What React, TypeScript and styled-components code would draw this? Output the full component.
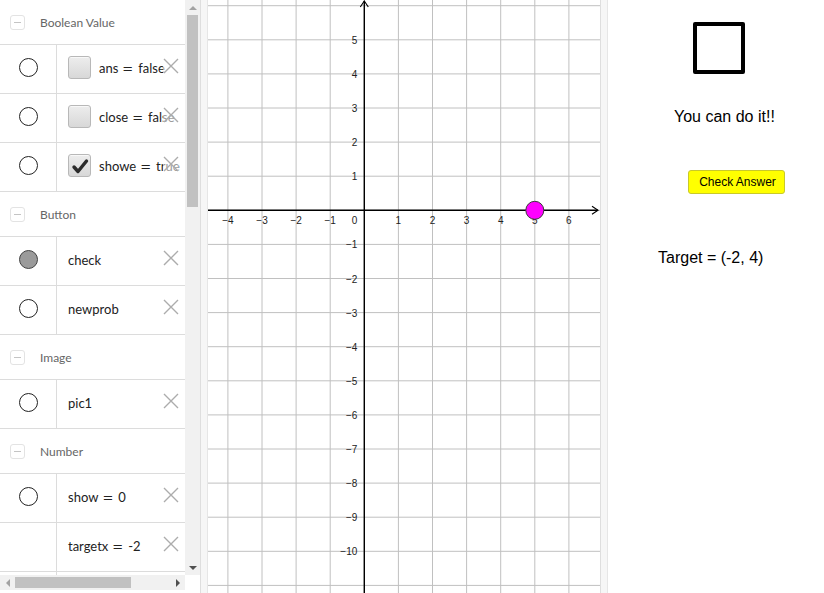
import styled, { createGlobalStyle } from "styled-components";

const GlobalStyle = createGlobalStyle`
  html, body {
    margin: 0;
    padding: 0;
    overflow: hidden;
    background: #fff;
  }
`;

const Frame = styled.div`
  display: flex;
  width: 824px;
  height: 593px;
  background: #fff;
  font-family: "Lato", "Liberation Sans", sans-serif;
`;

/* ---------- algebra view ---------- */

const AlgebraPanel = styled.div`
  display: flex;
  flex-direction: column;
  width: 200px;
  height: 593px;
  flex-shrink: 0;
`;

const AlgebraBody = styled.div`
  display: flex;
  height: 575px;
`;

const List = styled.div`
  width: 185px;
  height: 575px;
  overflow: hidden;
`;

const Header = styled.div`
  display: flex;
  align-items: center;
  gap: 15px;
  height: 44px;
  padding-left: 10px;
  border-bottom: 1px solid #dcdcdc;
`;

const Collapse = styled.div`
  display: flex;
  align-items: center;
  justify-content: center;
  width: 13px;
  height: 13px;
  border: 1px solid #e3e3e3;
  border-radius: 3px;

  &::after {
    content: "";
    width: 7px;
    height: 1px;
    background: #c4c4c4;
  }
`;

const HeaderLabel = styled.span`
  font-size: 12px;
  color: #666;
`;

const Row = styled.div`
  position: relative;
  display: flex;
  height: 45px;
  padding-bottom: 3px;
  border-bottom: 1px solid #dcdcdc;
`;

const MarbleCell = styled.div`
  display: flex;
  align-items: center;
  justify-content: center;
  width: 56px;
  margin-bottom: -3px;
  padding-bottom: 3px;
  border-right: 1px solid #dcdcdc;
`;

const Marble = styled.div<{ $on?: boolean }>`
  width: 17px;
  height: 17px;
  border-radius: 50%;
  border: 1.3px solid ${(p) => (p.$on ? "#444" : "#222")};
  background: ${(p) => (p.$on ? "#9b9b9b" : "#fff")};
`;

const Content = styled.div`
  display: flex;
  align-items: center;
  gap: 8px;
  flex: 1;
  padding-left: 11px;
  white-space: nowrap;
`;

const CheckBox = styled.div`
  display: flex;
  align-items: center;
  justify-content: center;
  width: 21px;
  height: 21px;
  flex-shrink: 0;
  border: 1px solid #b8b8b8;
  border-radius: 3px;
  background: linear-gradient(#ededed, #d8d8d8);
  box-shadow: inset 0 6px 0 -5px #f8f8f8;
`;

const Value = styled.span`
  font-size: 13px;
  color: #222;
`;

const Eq = styled.span`
  display: inline-block;
  margin: 0 5px 0 4px;
  font-family: "DejaVu Sans", sans-serif;
  font-size: 13px;
`;

const Delete = styled.div`
  position: absolute;
  right: 6px;
  top: 13px;
  width: 16px;
  height: 16px;
  background: rgba(255, 255, 255, 0.55);
`;

const VScroll = styled.div`
  display: flex;
  flex-direction: column;
  width: 15px;
  background: #f1f1f1;
`;

const HScroll = styled.div`
  display: flex;
  align-items: center;
  width: 185px;
  height: 15px;
  background: #f1f1f1;
`;

const ArrowBox = styled.div`
  display: flex;
  align-items: center;
  justify-content: center;
  width: 15px;
  height: 15px;
  flex-shrink: 0;
`;

const Triangle = styled.div<{ $dir: "up" | "down" | "left" | "right"; $dark?: boolean }>`
  width: 0;
  height: 0;
  ${(p) => {
    const c = p.$dark ? "#505050" : "#a3a3a3";
    switch (p.$dir) {
      case "up":
        return `border-left: 4px solid transparent; border-right: 4px solid transparent; border-bottom: 4px solid ${c};`;
      case "down":
        return `border-left: 4px solid transparent; border-right: 4px solid transparent; border-top: 4px solid ${c};`;
      case "left":
        return `border-top: 4px solid transparent; border-bottom: 4px solid transparent; border-right: 4px solid ${c};`;
      default:
        return `border-top: 4px solid transparent; border-bottom: 4px solid transparent; border-left: 4px solid ${c};`;
    }
  }}
`;

const VThumb = styled.div`
  height: 192px;
  margin: 0 2px;
  background: #c1c1c1;
`;

const HThumb = styled.div`
  width: 116px;
  height: 11px;
  background: #c1c1c1;
`;

const Spacer = styled.div`
  flex: 1;
`;

const HScrollRow = styled.div`
  display: flex;
`;

/* ---------- splitters / views ---------- */

const Splitter = styled.div`
  width: 6px;
  height: 593px;
  flex-shrink: 0;
  background: #f6f6f6;
  border-left: 1px solid #dedede;
  border-right: 1px solid #e6e6e6;
`;

const GraphicsView = styled.div`
  width: 392px;
  height: 593px;
  flex-shrink: 0;
  overflow: hidden;
`;

const SideView = styled.div`
  display: flex;
  flex-direction: column;
  align-items: flex-start;
  flex: 1;
  padding-top: 22px;
  font-family: "Liberation Sans", Arial, sans-serif;
`;

const Square = styled.div`
  width: 44px;
  height: 44px;
  margin-left: 85px;
  border: 4px solid #000;
  border-radius: 2px;
`;

const Caption = styled.div<{ $top: number; $left: number }>`
  margin-top: ${(p) => p.$top}px;
  margin-left: ${(p) => p.$left}px;
  font-size: 16px;
  line-height: 18px;
  color: #000;
`;

const AnswerButton = styled.button`
  margin-top: 44px;
  margin-left: 80px;
  width: 97px;
  height: 24px;
  padding: 0 0 0 2px;
  font-family: "Liberation Sans", Arial, sans-serif;
  font-size: 12px;
  color: #000;
  background: #ffff00;
  border: 1px solid #c9c92a;
  border-radius: 3px;
`;

/* ---------- data ---------- */

type Item = {
  name: string;
  value?: string;
  marble?: "on" | "off";
  box?: "on" | "off";
};

const groups: { title: string; items: Item[] }[] = [
  {
    title: "Boolean Value",
    items: [
      { name: "ans", value: "false", marble: "off", box: "off" },
      { name: "close", value: "false", marble: "off", box: "off" },
      { name: "showe", value: "true", marble: "off", box: "on" },
    ],
  },
  {
    title: "Button",
    items: [
      { name: "check", marble: "on" },
      { name: "newprob", marble: "off" },
    ],
  },
  { title: "Image", items: [{ name: "pic1", marble: "off" }] },
  {
    title: "Number",
    items: [
      { name: "show", value: "0", marble: "off" },
      { name: "targetx", value: "-2" },
    ],
  },
];

const CrossIcon = () => (
  <svg width="16" height="16" viewBox="0 0 16 16">
    <path d="M1 1 L15 15 M15 1 L1 15" stroke="#acacac" strokeWidth="1.4" fill="none" />
  </svg>
);

const Tick = () => (
  <svg width="20" height="20" viewBox="0 0 20 20">
    <polyline
      points="4,11 8,15.5 16.5,5"
      stroke="#2b2b2b"
      strokeWidth="3.4"
      strokeLinecap="round"
      strokeLinejoin="round"
      fill="none"
    />
  </svg>
);

const AlgebraRow = ({ item }: { item: Item }) => (
  <Row>
    <MarbleCell>{item.marble && <Marble $on={item.marble === "on"} />}</MarbleCell>
    <Content>
      {item.box && <CheckBox>{item.box === "on" && <Tick />}</CheckBox>}
      <Value>
        {item.name}
        {item.value !== undefined && (
          <>
            <Eq>=</Eq>
            {item.value}
          </>
        )}
      </Value>
    </Content>
    <Delete>
      <CrossIcon />
    </Delete>
  </Row>
);

/* ---------- graph ---------- */

const W = 392;
const H = 593;
const OX = 156.3;
const OY = 210.3;
const U = 34.1;

const fmt = (n: number) => (n < 0 ? `\u2212${-n}` : `${n}`);

const Graph = () => {
  const xs: number[] = [];
  for (let k = -4; k <= 6; k++) xs.push(k);
  const ys: number[] = [];
  for (let k = -11; k <= 6; k++) ys.push(k);

  return (
    <svg width={W} height={H} viewBox={`0 0 ${W} ${H}`}>
      <g stroke="#c0c0c0" strokeWidth="1">
        {xs.map((k) => (
          <line key={`gx${k}`} x1={OX + k * U} y1={0} x2={OX + k * U} y2={H} />
        ))}
        {ys.map((k) => (
          <line key={`gy${k}`} x1={0} y1={OY - k * U} x2={W} y2={OY - k * U} />
        ))}
      </g>
      <g stroke="#000" strokeWidth="1.4" fill="none">
        <line x1={0} y1={OY} x2={W - 2} y2={OY} />
        <polyline points={`${W - 8},${OY - 4} ${W - 2},${OY} ${W - 8},${OY + 4}`} strokeWidth="1.1" />
        <line x1={OX} y1={1} x2={OX} y2={H} />
        <polyline points={`${OX - 4},${7} ${OX},${1} ${OX + 4},${7}`} strokeWidth="1.1" />
      </g>
      <g fontFamily="'Liberation Sans', Arial, sans-serif" fontSize="10" fill="#222">
        {xs
          .filter((k) => k !== 0)
          .map((k) => (
            <text key={`lx${k}`} x={OX + k * U} y={OY + 14} textAnchor="middle">
              {fmt(k)}
            </text>
          ))}
        <text x={OX - 7} y={OY + 14} textAnchor="end">
          0
        </text>
        {ys
          .filter((k) => k !== 0 && k <= 5 && k >= -10)
          .map((k) => (
            <text key={`ly${k}`} x={OX - 7} y={OY - k * U + 4} textAnchor="end">
              {fmt(k)}
            </text>
          ))}
      </g>
      <circle cx={OX + 5 * U} cy={OY} r={9} fill="#ff00ff" stroke="#3a3a3a" strokeWidth="1" />
    </svg>
  );
};

export default function App() {
  return (
    <>
      <GlobalStyle />
      <Frame>
        <AlgebraPanel>
          <AlgebraBody>
            <List>
              {groups.map((g) => (
                <div key={g.title}>
                  <Header>
                    <Collapse />
                    <HeaderLabel>{g.title}</HeaderLabel>
                  </Header>
                  {g.items.map((it) => (
                    <AlgebraRow key={it.name} item={it} />
                  ))}
                </div>
              ))}
              <Row>
                <MarbleCell />
              </Row>
            </List>
            <VScroll>
              <ArrowBox>
                <Triangle $dir="up" />
              </ArrowBox>
              <VThumb />
              <Spacer />
              <ArrowBox>
                <Triangle $dir="down" $dark />
              </ArrowBox>
            </VScroll>
          </AlgebraBody>
          <HScrollRow>
            <HScroll>
              <ArrowBox>
                <Triangle $dir="left" />
              </ArrowBox>
              <HThumb />
              <Spacer />
              <ArrowBox>
                <Triangle $dir="right" $dark />
              </ArrowBox>
            </HScroll>
          </HScrollRow>
        </AlgebraPanel>
        <Splitter />
        <GraphicsView>
          <Graph />
        </GraphicsView>
        <Splitter />
        <SideView>
          <Square />
          <Caption $top={34} $left={66}>
            You can do it!!
          </Caption>
          <AnswerButton>Check Answer</AnswerButton>
          <Caption $top={55} $left={50}>
            Target = (-2, 4)
          </Caption>
        </SideView>
      </Frame>
    </>
  );
}
